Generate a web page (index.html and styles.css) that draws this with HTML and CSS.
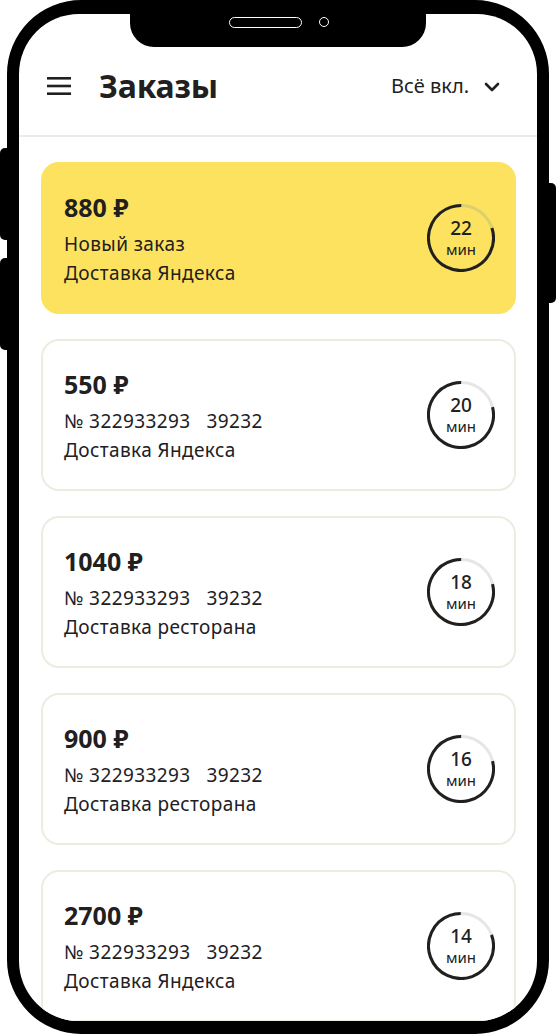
FILE: index.html
```html
<!DOCTYPE html>
<html lang="ru">
<head>
<meta charset="utf-8">
<title>Заказы</title>
<link rel="stylesheet" href="styles.css">
</head>
<body>
<div class="device">
  <span class="side-btn side-l1"></span>
  <span class="side-btn side-l2"></span>
  <span class="side-btn side-r1"></span>
  <div class="screen">
    <div class="notch"><span class="speaker"></span><span class="camera"></span></div>
    <header class="topbar">
      <svg class="burger" width="24" height="20" viewBox="0 0 24 20"><rect x="0" y="1" width="24" height="2.6" fill="#21201f"/><rect x="0" y="8.7" width="24" height="2.6" fill="#21201f"/><rect x="0" y="16.4" width="24" height="2.6" fill="#21201f"/></svg>
      <h1 class="title">Заказы</h1>
      <div class="filter">
        <span class="filter-label">Всё вкл.</span>
        <svg class="chevron" width="16" height="10" viewBox="0 0 16 10"><path d="M2 2 L8 8 L14 2" fill="none" stroke="#21201f" stroke-width="2.6" stroke-linecap="round" stroke-linejoin="round"/></svg>
      </div>
    </header>
    <main class="list">
      <article class="card card-new">
        <div class="info">
          <div class="price">880 ₽</div>
          <div class="line">Новый заказ</div>
          <div class="line">Доставка Яндекса</div>
        </div>
        <div class="timer">
          <svg width="68" height="68" viewBox="0 0 68 68"><circle class="track" cx="34" cy="34" r="32.5"/><circle class="progress" cx="34" cy="34" r="32.5" stroke-dasharray="163.4 300" transform="rotate(-18 34 34)"/></svg>
          <div class="timer-text"><span class="num">22</span><span class="unit">мин</span></div>
        </div>
      </article>
      <article class="card">
        <div class="info">
          <div class="price">550 ₽</div>
          <div class="line">№ 322933293&nbsp;&nbsp;&nbsp;39232</div>
          <div class="line">Доставка Яндекса</div>
        </div>
        <div class="timer">
          <svg width="68" height="68" viewBox="0 0 68 68"><circle class="track" cx="34" cy="34" r="32.5"/><circle class="progress" cx="34" cy="34" r="32.5" stroke-dasharray="161 300" transform="rotate(-14 34 34)"/></svg>
          <div class="timer-text"><span class="num">20</span><span class="unit">мин</span></div>
        </div>
      </article>
      <article class="card">
        <div class="info">
          <div class="price">1040 ₽</div>
          <div class="line">№ 322933293&nbsp;&nbsp;&nbsp;39232</div>
          <div class="line">Доставка ресторана</div>
        </div>
        <div class="timer">
          <svg width="68" height="68" viewBox="0 0 68 68"><circle class="track" cx="34" cy="34" r="32.5"/><circle class="progress" cx="34" cy="34" r="32.5" stroke-dasharray="161 300" transform="rotate(-14 34 34)"/></svg>
          <div class="timer-text"><span class="num">18</span><span class="unit">мин</span></div>
        </div>
      </article>
      <article class="card">
        <div class="info">
          <div class="price">900 ₽</div>
          <div class="line">№ 322933293&nbsp;&nbsp;&nbsp;39232</div>
          <div class="line">Доставка ресторана</div>
        </div>
        <div class="timer">
          <svg width="68" height="68" viewBox="0 0 68 68"><circle class="track" cx="34" cy="34" r="32.5"/><circle class="progress" cx="34" cy="34" r="32.5" stroke-dasharray="161 300" transform="rotate(-14 34 34)"/></svg>
          <div class="timer-text"><span class="num">16</span><span class="unit">мин</span></div>
        </div>
      </article>
      <article class="card">
        <div class="info">
          <div class="price">2700 ₽</div>
          <div class="line">№ 322933293&nbsp;&nbsp;&nbsp;39232</div>
          <div class="line">Доставка Яндекса</div>
        </div>
        <div class="timer">
          <svg width="68" height="68" viewBox="0 0 68 68"><circle class="track" cx="34" cy="34" r="32.5"/><circle class="progress" cx="34" cy="34" r="32.5" stroke-dasharray="164 300" transform="rotate(-20 34 34)"/></svg>
          <div class="timer-text"><span class="num">14</span><span class="unit">мин</span></div>
        </div>
      </article>
    </main>
  </div>
</div>
</body>
</html>
```
FILE: styles.css
```css
* { box-sizing: border-box; }
html, body { margin: 0; padding: 0; background: #ffffff; }
body {
  font-family: "Noto Sans", "Open Sans", sans-serif;
  color: #21201f;
  width: 556px;
  height: 1035px;
  overflow: hidden;
}

.device {
  position: relative;
  margin-left: 7px;
  width: 542px;
  height: 1034px;
  border-style: solid;
  border-color: #000;
  border-width: 14px 12px 13px 12px;
  border-radius: 74px;
  background: #000;
}

.side-btn {
  position: absolute;
  background: #000;
  width: 8px;
}
.side-l1 { left: -19px; top: 134px; height: 92px; border-radius: 5px 0 0 5px; }
.side-l2 { left: -19px; top: 244px; height: 92px; border-radius: 5px 0 0 5px; }
.side-r1 { right: -19px; top: 169px; height: 120px; border-radius: 0 5px 5px 0; }

.screen {
  position: relative;
  width: 100%;
  height: 100%;
  background: #fff;
  border-radius: 60px;
  overflow: hidden;
  display: flex;
  flex-direction: column;
}

.notch {
  position: absolute;
  top: 0;
  left: 111px;
  width: 296px;
  height: 33px;
  background: #000;
  border-radius: 0 0 24px 24px;
}
.speaker {
  position: absolute;
  left: 99px;
  top: 3px;
  width: 73px;
  height: 11px;
  border: 1px solid #fff;
  border-radius: 6px;
}
.camera {
  position: absolute;
  left: 189px;
  top: 3px;
  width: 10px;
  height: 10px;
  border: 1px solid #fff;
  border-radius: 50%;
}

.topbar {
  flex: none;
  height: 123px;
  padding: 50px 37px 0 28px;
  display: flex;
  align-items: flex-start;
  border-bottom: 2px solid #ebebeb;
}
.burger { margin-top: 12px; flex: none; }
.title {
  margin: 0 0 0 28px;
  font-size: 32px;
  font-weight: 700;
  line-height: 44px;
  letter-spacing: -0.2px;
}
.filter {
  margin-left: auto;
  display: flex;
  align-items: center;
  height: 44px;
  gap: 15px;
}
.filter-label {
  font-size: 20px;
  line-height: 24px;
}
.chevron { margin-top: 1px; }

.list {
  padding: 25px 21px 0 22px;
  display: flex;
  flex-direction: column;
  gap: 25px;
}

.card {
  flex: none;
  height: 152px;
  border: 2px solid #eeece0;
  border-radius: 18px;
  padding: 0 19px 0 21px;
  display: flex;
  align-items: center;
  justify-content: space-between;
  background: #fff;
}
.card-new {
  background: #fce25e;
  border-color: #fce25e;
}

.info {
  display: flex;
  flex-direction: column;
  padding-top: 3px;
}
.price {
  font-size: 25px;
  font-weight: 700;
  line-height: 30px;
  margin-bottom: 8px;
}
.line {
  font-size: 19px;
  line-height: 29px;
  letter-spacing: 0.4px;
}

.timer {
  position: relative;
  width: 68px;
  height: 68px;
  flex: none;
}
.timer svg { display: block; }
.track { fill: none; stroke: #e6e6e6; stroke-width: 3; }
.card-new .track { stroke: #dccf6c; }
.progress { fill: none; stroke: #21201f; stroke-width: 3; }
.timer-text {
  position: absolute;
  inset: 0;
  display: flex;
  flex-direction: column;
  align-items: center;
  justify-content: center;
}
.num {
  font-size: 19px;
  font-weight: 500;
  line-height: 23px;
}
.unit {
  font-size: 15px;
  line-height: 19px;
}
```
